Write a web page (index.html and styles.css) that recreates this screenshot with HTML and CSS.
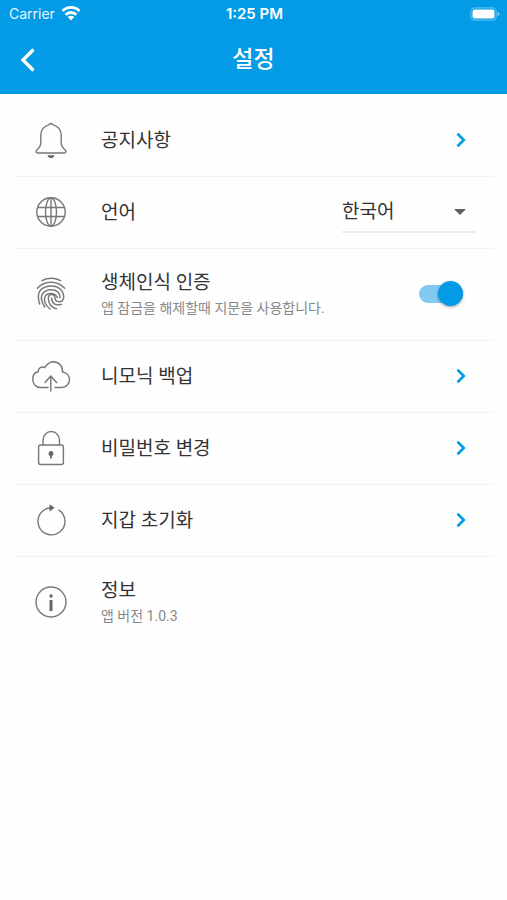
FILE: index.html
```html
<!DOCTYPE html>
<html lang="ko">
<head>
<meta charset="utf-8">
<meta name="viewport" content="width=device-width, initial-scale=1">
<title>설정</title>
<link rel="stylesheet" href="styles.css">
</head>
<body>
<header class="top">
  <div class="status">
    <div class="carrier">
      <span>Carrier</span>
      <svg class="wifi" viewBox="0 0 20 16" aria-hidden="true"><g fill="none" stroke="currentColor" stroke-width="2.8"><path d="M1.500 5a12 12 0 0 1 17 0"/><path d="M4.600 8.700a7.700 7.700 0 0 1 10.800 0"/></g><path d="M10 14.500l-3.300-3.500a4.700 4.700 0 0 1 6.600 0z" fill="currentColor"/></svg>
    </div>
    <span class="time">1:25 PM</span>
    <svg class="battery" viewBox="0 0 30 14" aria-hidden="true"><rect x=".8" y=".8" width="25.400" height="12.400" rx="4" fill="none" stroke="#5cbcf0" stroke-width="1.200"/><rect x="2.500" y="2.500" width="22" height="9" rx="2.200" fill="#fff"/><path d="M27.600 5v4q2-.6 2-2t-2-2z" fill="#7fccf5"/></svg>
  </div>
  <div class="bar">
    <button class="back" type="button" aria-label="뒤로"><svg viewBox="0 0 16 26" aria-hidden="true"><path d="M13.500 2.500L3 13l10.500 10.500" fill="none" stroke="currentColor" stroke-width="3.400"/></svg></button>
    <h1>설정</h1>
  </div>
</header>
<main class="list">
  <a class="row" href="#notice">
    <svg class="icon" viewBox="0 0 40 40" aria-hidden="true"><path d="M18.300 4.600a1.900 1.900 0 0 1 3.400 0C26.500 6 30 10 30.200 15v7.500c0 4 1.600 5.400 3.800 7.300 1.400 1.300 1.200 3.200-.6 3.200H6.600c-1.800 0-2-1.900-.6-3.200 2.200-1.900 3.800-3.300 3.800-7.300V15C10 10 13.500 6 18.300 4.600z"/><path class="solid" d="M16.500 35.200h7q-.6 2.800-3.500 2.800t-3.500-2.800z"/></svg>
    <span class="label">공지사항</span>
    <svg class="chevron" viewBox="0 0 10 16" aria-hidden="true"><path d="M1.500 1.800L7.800 8l-6.300 6.200"/></svg>
  </a>
  <div class="row">
    <svg class="icon" viewBox="0 0 40 40" aria-hidden="true"><circle cx="20" cy="20" r="14.200"/><ellipse cx="20" cy="20" rx="5.500" ry="14.200"/><path d="M7 15.500h26M7 24.500h26M20 5.800v28.400"/></svg>
    <label class="label" for="language">언어</label>
    <div class="picker">
      <select id="language"><option>한국어</option><option>English</option></select>
      <svg viewBox="0 0 12 6" aria-hidden="true"><path d="M0 0h12L6 6z"/></svg>
    </div>
  </div>
  <div class="row tall">
    <svg class="icon" viewBox="93 72 120 120" aria-hidden="true"><g class="ridges"><path d="M126 92q27-14 56 0M112 115Q129 97 153 97t41 18"/><path d="M119 162Q110 134 121 121 133 108 154 108C177 108 191 122 191 142c0 17-25 17-26 2-1-14-20-14-20 2 0 15 10 27 24 30"/><path d="M134 171Q119 147 127 132 136 119 153 119C171 119 180 129 180 143"/><path d="M150 177Q129 158 134 143C138 126 166 126 172 143"/><path d="M155 145c0 15 12 23 29 18"/></g></svg>
    <label class="label" for="biometric">생체인식 인증<small>앱 잠금을 해제할때 지문을 사용합니다.</small></label>
    <input class="switch" id="biometric" type="checkbox" role="switch" checked>
  </div>
  <a class="row" href="#backup">
    <svg class="icon" viewBox="0 0 40 40" aria-hidden="true"><path d="M17 31.500H9.500A7.800 7.800 0 0 1 1.800 23c0-4 2.500-6.700 5.500-7.200C7 12 10.500 10 14 11.500A10.500 10.500 0 0 1 22 5.800c6 0 10 4.500 9.500 10.200 4 .5 7 3.500 7 7.700a7.800 7.800 0 0 1-7.800 7.800H24M19.800 35V20M14 26.500l5.800-6.500 5.800 6.500"/></svg>
    <span class="label">니모닉 백업</span>
    <svg class="chevron" viewBox="0 0 10 16" aria-hidden="true"><path d="M1.500 1.800L7.800 8l-6.300 6.200"/></svg>
  </a>
  <a class="row" href="#password">
    <svg class="icon" viewBox="0 0 40 40" aria-hidden="true"><rect x="7.600" y="17" width="24.800" height="19.500" rx="2"/><path d="M12 17v-5a8 8.300 0 0 1 16.500 0v5"/><path class="solid" d="M20 23a2.600 2.600 0 0 1 .9 5v2.500h-1.800V28a2.600 2.600 0 0 1 .9-5z"/></svg>
    <span class="label">비밀번호 변경</span>
    <svg class="chevron" viewBox="0 0 10 16" aria-hidden="true"><path d="M1.500 1.800L7.800 8l-6.300 6.200"/></svg>
  </a>
  <a class="row" href="#reset">
    <svg class="icon" viewBox="0 0 40 40" aria-hidden="true"><path d="M20 7.800a13.500 13.500 0 1 0 8 2.300"/><path class="solid" d="M18.500 4.200L23.600 7.800l-5.100 3.600z"/></svg>
    <span class="label">지갑 초기화</span>
    <svg class="chevron" viewBox="0 0 10 16" aria-hidden="true"><path d="M1.500 1.800L7.800 8l-6.300 6.200"/></svg>
  </a>
  <div class="row tall">
    <svg class="icon" viewBox="0 0 40 40" aria-hidden="true"><circle cx="20" cy="20" r="15"/><circle class="solid" cx="20" cy="14" r="1.700"/><path class="solid" d="M18.500 18h3v11h-3z"/></svg>
    <span class="label">정보<small>앱 버전 1.0.3</small></span>
  </div>
</main>
</body>
</html>
```
FILE: styles.css
```css
* { box-sizing: border-box; }
body {
  margin: 0;
  background: #fefefe;
  color: #333;
  font-family: Roboto, "Noto Sans CJK KR", sans-serif;
}
.top { background: #039be5; color: #fff; }
.status {
  display: grid;
  grid-template-columns: 1fr auto 1fr;
  align-items: center;
  height: 27px;
  padding: 0 7px 0 9px;
  font: 14px Inter, sans-serif;
}
.carrier { display: flex; align-items: center; gap: 6px; }
.carrier span { opacity: 0.9; }
.wifi { width: 20px; height: 16px; }
.time { font-size: 15px; font-weight: 600; }
.battery { width: 30px; height: 14px; justify-self: end; }
.bar {
  display: grid;
  grid-template-columns: 56px 1fr 56px;
  align-items: center;
  height: 67px;
  padding-bottom: 2px;
}
.back {
  display: flex;
  justify-content: center;
  padding: 0;
  border: 0;
  background: none;
  color: inherit;
}
.back svg { width: 16px; height: 26px; }
h1 {
  margin: 0;
  font-size: 23px;
  line-height: 32px;
  font-weight: 500;
  text-align: center;
}
.list { padding: 11px 12px 0 15px; }
.row {
  display: flex;
  align-items: center;
  height: 72px;
  padding: 0 19px 2px 16px;
  border-bottom: 1px solid #f3f3f3;
  color: inherit;
  text-decoration: none;
}
.tall { height: 92px; }
.row:last-child { border-bottom: 0; }
.icon {
  flex: none;
  width: 40px;
  height: 40px;
  margin-right: 30px;
  fill: none;
  stroke: #777;
  stroke-width: 1.4;
  stroke-linecap: round;
  stroke-linejoin: round;
}
.icon .solid { fill: #666; stroke: none; }
.ridges { stroke-width: 4.4; }
.label { flex: 1; padding-top: 2px; font-size: 19px; line-height: 26px; }
.label small { display: block; font-size: 14px; line-height: 24px; color: #888; }
.chevron {
  width: 10px;
  height: 16px;
  margin-right: 10px;
  fill: none;
  stroke: #039be5;
  stroke-width: 2.6;
}
.picker {
  display: grid;
  align-items: center;
  width: 134px;
  border-bottom: 2px solid #ececec;
}
.picker select {
  grid-area: 1 / 1;
  width: 100%;
  height: 40px;
  padding: 2px 0 0;
  border: 0;
  appearance: none;
  background: none;
  color: inherit;
  font: inherit;
  font-size: 19px;
}
.picker svg {
  grid-area: 1 / 1;
  justify-self: end;
  width: 12px;
  height: 6px;
  margin: 2px 10px 0 0;
  fill: #616161;
  pointer-events: none;
}
.switch {
  display: flex;
  align-items: center;
  justify-content: flex-end;
  appearance: none;
  width: 44px;
  height: 18px;
  margin: 0 13px 0 0;
  border-radius: 9px;
  background: #82caf2;
}
.switch::before {
  content: "";
  width: 25px;
  height: 25px;
  border-radius: 50%;
  background: #039be5;
  box-shadow: 0 1px 3px rgba(0, 0, 0, 0.4);
}
.switch:not(:checked) { justify-content: flex-start; background: #ccc; }
```
